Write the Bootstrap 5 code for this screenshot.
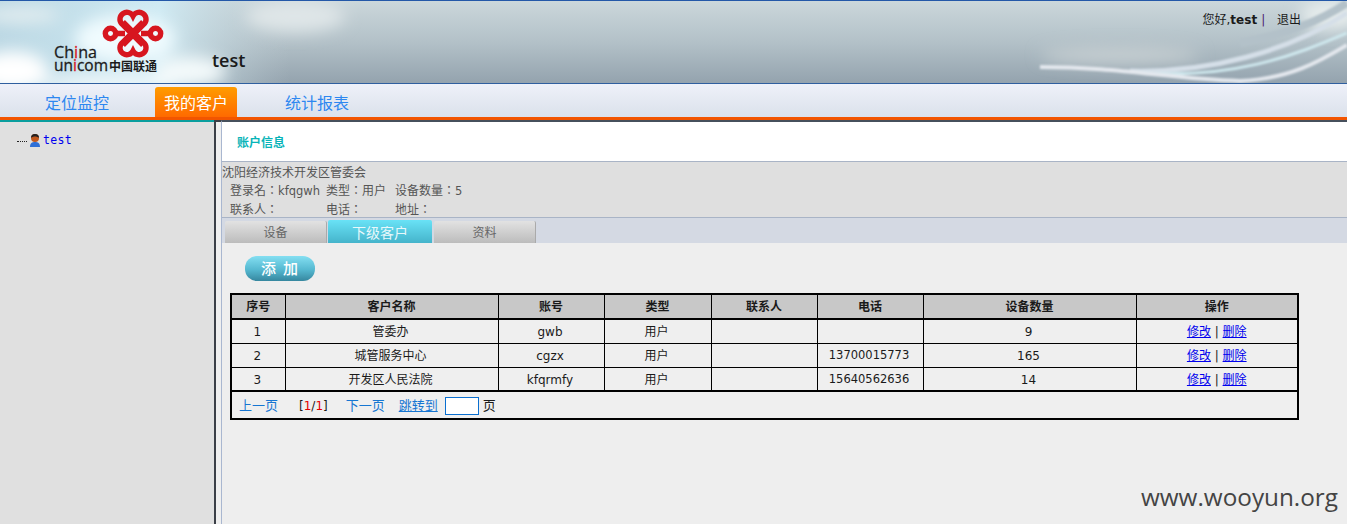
<!DOCTYPE html>
<html lang="zh-CN">
<head>
  <meta charset="UTF-8" />
  <meta name="viewport" content="width=device-width, initial-scale=1.0"/>
  <title>我的客户</title>
  <link href="https://cdn.jsdelivr.net/npm/bootstrap@5.3.3/dist/css/bootstrap.min.css" rel="stylesheet">
  <style>
    html, body { height: 100%; }
    body {
      margin: 0;
      overflow: hidden;
      background: #eee;
      color: #222;
      font-family: "DejaVu Sans", "Noto Sans CJK SC", sans-serif;
      font-size: 12px;
      line-height: 1.2;
    }

    /* top banner */
    .top-banner {
      position: relative;
      height: 84px;
      flex: none;
      border-top: 1px solid #2358a8;
      border-bottom: 1px solid #2f5f9f;
      background: linear-gradient(180deg, #cbd7db 0%, #b3c1c8 50%, #94a3ae 100%);
      overflow: hidden;
    }
    .banner-art { position: absolute; left: 0; top: 0; }
    .logo-art { position: relative; margin-left: 50px; flex: none; }
    .site-name { position: relative; margin: 49px 0 0 46px; font-family: "Open Sans", sans-serif; font-size: 18px; font-weight: 600; color: #1a1a1a; }
    .user-box { position: relative; margin: 12px 46px 0 auto; color: #1a1a1a; font-size: 12px; white-space: nowrap; }
    .user-box b { font-weight: 700; }
    .user-box i { font-style: normal; color: #4b1b6f; margin: 0 8px 0 4px; }

    /* main nav */
    .main-nav {
      height: 33px;
      flex: none;
      padding-left: 28px;
      background: linear-gradient(180deg, #eef1f9, #dbe1eb);
    }
    .main-nav a {
      display: block;
      width: 98px;
      text-align: center;
      text-decoration: none;
      font-size: 16px;
      line-height: 39px;
      color: #2d87f0;
    }
    .main-nav a.first { margin-right: 29px; }
    .main-nav a.on {
      width: 82px;
      margin: 3px 31px 0 0;
      line-height: 33px;
      color: #fff;
      border-radius: 3px 3px 0 0;
      background: linear-gradient(180deg, #ff9c00, #ff6a00);
    }
    .orange-rule { height: 3px; flex: none; background: #f25500; }

    /* body columns */
    .page-wrap { min-height: 0; flex: 1 1 auto; }
    .side-col {
      width: 214px;
      flex: none;
      border-top: 2px solid #0a9e9e;
      background: #e0e0e0;
      padding: 11px 0 0 17px;
    }
    .tree-dots { width: 10px; border-bottom: 1px dotted #222; margin: 8px 2px 0 0; height: 0; }
    .tree-label { font-family: "DejaVu Sans Mono", monospace; font-size: 11.5px; letter-spacing: .3px; color: #0000ee; margin-left: 2px; line-height: 14px; }
    .split-bar {
      width: 8px;
      flex: none;
      border-left: 2px solid #3b3f47;
      border-right: 1px solid #a9b7d0;
      border-top: 2px solid #3b3f47;
      background: #efefef;
    }
    .main-col { min-width: 0; flex: 1 1 auto; border-top: 2px solid #46505c; }

    .acct-title { height: 39px; padding: 14px 0 0 15px; background: #fff; font-weight: 700; color: #08b4b8; }
    .acct-info {
      height: 57px;
      border-top: 1px solid #a9b4c6;
      border-bottom: 1px solid #a9b4c6;
      background: #dfdfdf;
      color: #555;
      padding-top: 4px;
    }
    .acct-grid {
      display: grid;
      grid-template-columns: 96px 69px auto;
      justify-content: start;
      row-gap: 3px;
      margin: 3px 0 0 8px;
      font-family: "Noto Sans CJK TC", sans-serif;
    }
    .latin-txt { font-family: "DejaVu Sans", sans-serif; font-size: 11.5px; }

    .sub-tabs { height: 25px; padding: 3px 0 0 3px; background: #d4d9e3; gap: 1px; }
    .sub-tabs a {
      width: 102px;
      height: 22px;
      text-align: center;
      text-decoration: none;
      line-height: 25px;
      color: #666;
      border-radius: 2px 2px 0 0;
      border-right: 1px solid #aaa;
      background: linear-gradient(180deg, #e2e2e2, #bcbcbc);
    }
    .sub-tabs a.on {
      width: 104px;
      height: 23px;
      margin: -1px 1px 0 0;
      font-size: 14px;
      line-height: 27px;
      color: #e8f8fb;
      border-right: 0;
      background: linear-gradient(180deg, #69e2f6, #45b4cb);
    }

    .work-area { padding: 13px 0 0 8px; }
    .add-btn {
      display: block;
      width: 70px;
      height: 25px;
      margin-left: 15px;
      padding: 0;
      border: 0;
      border-radius: 12px;
      font-size: 15px;
      font-weight: 500;
      line-height: 24px;
      color: #fff;
      letter-spacing: 1px;
      background: linear-gradient(180deg, #84dff2 0%, #55b8d0 55%, #36879f 100%);
    }
    .cust-wrap { width: 1067px; margin-top: 12px; }
    .cust-table {
      --bs-table-bg: #efefef;
      --bs-table-color: #1a1a1a;
      --bs-table-border-color: #000;
      table-layout: fixed;
      width: 100%;
      margin: 0;
      border: 2px solid #000;
      border-collapse: collapse;
    }
    .cust-table th, .cust-table td {
      padding: 2px 0 0;
      height: 24px;
      text-align: center;
      vertical-align: middle;
      border: 1px solid #000;
      font-size: 12px;
    }
    .cust-table tbody td { padding-right: 2px; }
    .cust-table tbody td:last-child { padding-right: 0; }
    .cust-table thead th { height: 25px; background: #c8c8c8; --bs-table-bg: #c8c8c8; font-weight: 700; border-bottom: 2px solid #000; }
    .cust-table td > a { color: #0000ee; }
    .cust-table .latin-txt { font-size: 11.5px; }
    .cust-table tfoot td { height: 28px; border-top: 2px solid #000; text-align: left; padding: 2px 0 0 7px; font-size: 13px; }
    .pager a { color: #1676d2; text-decoration: none; }
    .pager a.jump { text-decoration: underline; margin-left: 14px; }
    .pager .cur { margin: 0 18px 0 21px; font-size: 12px; }
    .pager .cur em { font-style: normal; color: #e60000; }
    .page-input { width: 34px; height: 18px; margin: 0 4px 0 7px; border: 1px solid #0a6fd0; background: #fff; padding: 0; }

    .wm-mark {
      position: absolute;
      right: 9px;
      bottom: 13px;
      font-family: "Open Sans", sans-serif;
      font-size: 24.3px;
      line-height: 1.2;
      color: #444;
    }
  </style>
</head>
<body class="d-flex flex-column">

  <div class="top-banner d-flex align-items-start">
    <svg class="banner-art" width="1347" height="82" viewBox="0 0 1347 82">
      <defs>
        <filter id="soft"><feGaussianBlur stdDeviation="8"/></filter>
        <filter id="soft2"><feGaussianBlur stdDeviation="1.2"/></filter>
        <linearGradient id="fadeL" x1="0" x2="1" y1="0" y2="0">
          <stop offset="0" stop-color="#bcd8e4"/>
          <stop offset=".55" stop-color="#cfeaf3"/>
          <stop offset="1" stop-color="#bccbd2" stop-opacity="0"/>
        </linearGradient>
      </defs>
      <rect x="0" y="0" width="290" height="82" fill="url(#fadeL)"/>
      <g filter="url(#soft)">
        <ellipse cx="125" cy="38" rx="50" ry="24" fill="#f0fbfe"/>
        <ellipse cx="20" cy="14" rx="40" ry="7" fill="#e6eff1"/>
        <ellipse cx="12" cy="70" rx="36" ry="20" fill="#fff"/>
        <ellipse cx="190" cy="70" rx="36" ry="14" fill="#f4fafb"/>
        <ellipse cx="110" cy="82" rx="70" ry="7" fill="#f8fcfd"/>
        <ellipse cx="295" cy="15" rx="50" ry="16" fill="#dfe6e8"/>
        <ellipse cx="1120" cy="54" rx="80" ry="8" fill="#c8d0d3"/>
        <ellipse cx="1330" cy="14" rx="30" ry="14" fill="#e8eeee"/>
      </g>
      <g fill="none" filter="url(#soft2)">
        <path d="M1130 70C1210 72 1290 50 1347 12" stroke="#d5dfe8" stroke-width="5"/>
        <path d="M1125 70C1230 82 1300 52 1347 32" stroke="#cfe8ee" stroke-width="3"/>
        <path d="M1040 66C1120 66 1170 78 1240 80C1290 78 1320 60 1347 44" stroke="#e4e8ee" stroke-width="4"/>
        <path d="M1240 42C1290 32 1320 20 1347 2" stroke="#b3c1c9" stroke-width="8"/>
      </g>
    </svg>
    <svg class="logo-art" width="116" height="82" viewBox="50 0 116 82">
      <g fill="none" stroke="#d7161f" stroke-width="5.400">
        <path d="M143 44 121.500 22.500A6.900 6.900 0 1 1 133 15A6.900 6.900 0 1 1 144.500 22.500L123 44"/>
        <path d="M143 21 121.500 42.500A6.900 6.900 0 1 0 133 50A6.900 6.900 0 1 0 144.500 42.500L123 21"/>
        <circle cx="110.500" cy="32.500" r="5.200"/>
        <circle cx="155.500" cy="32.500" r="5.200"/>
        <path d="M115 32.500H125M141 32.500H151"/>
      </g>
      <g font-family="'Open Sans', sans-serif" font-size="15.500" fill="#1b1b1b" stroke="#1b1b1b" stroke-width=".3">
        <text x="54" y="57" textLength="43" lengthAdjust="spacingAndGlyphs">Ch<tspan fill="#d7161f" stroke="#d7161f">i</tspan>na</text>
        <text x="54" y="70" textLength="54" lengthAdjust="spacingAndGlyphs">un<tspan fill="#d7161f" stroke="#d7161f">i</tspan>com</text>
      </g>
      <text x="109" y="69.500" font-family="'Noto Sans CJK SC', sans-serif" font-size="12" font-weight="700" fill="#1b1b1b" textLength="48" lengthAdjust="spacingAndGlyphs">中国联通</text>
    </svg>
    <div class="site-name">test</div>
    <div class="user-box">您好,<b>test</b><i>|</i> 退出</div>
  </div>

  <div class="main-nav d-flex flex-row">
    <a href="#" class="first">定位监控</a>
    <a href="#" class="on">我的客户</a>
    <a href="#">统计报表</a>
  </div>
  <div class="orange-rule"></div>

  <div class="page-wrap d-flex">
    <div class="side-col d-flex align-items-start">
      <span class="tree-dots"></span>
      <svg width="12" height="14" viewBox="0 0 12 14">
        <path d="M1 14C1 10 3 9 6 9s5 1 5 5z" fill="#2f6fd6"/>
        <circle cx="6" cy="5" r="4" fill="#c2581c"/>
        <path d="M2 5a4 4 0 0 1 8 0C8 3 4 3 2 5z" fill="#222"/>
      </svg>
      <span class="tree-label">test</span>
    </div>
    <div class="split-bar"></div>
    <div class="main-col d-flex flex-column">
      <div class="acct-title">账户信息</div>
      <div class="acct-info">
        <div>沈阳经济技术开发区管委会</div>
        <div class="acct-grid" lang="zh-TW">
          <span>登录名：<span class="latin-txt">kfqgwh</span></span><span>类型：用户</span><span>设备数量：<span class="latin-txt">5</span></span>
          <span>联系人：</span><span>电话：</span><span>地址：</span>
        </div>
      </div>
      <div class="sub-tabs d-flex">
        <a href="#">设备</a>
        <a href="#" class="on">下级客户</a>
        <a href="#">资料</a>
      </div>
      <div class="work-area flex-grow-1">
        <button type="button" class="btn add-btn">添 加</button>
        <div class="cust-wrap">
          <table class="table cust-table">
            <colgroup>
              <col width="54"><col width="213"><col width="106"><col width="107"><col width="106"><col width="106"><col width="213"><col width="162">
            </colgroup>
            <thead>
              <tr><th>序号</th><th>客户名称</th><th>账号</th><th>类型</th><th>联系人</th><th>电话</th><th>设备数量</th><th>操作</th></tr>
            </thead>
            <tbody>
              <tr><td>1</td><td>管委办</td><td>gwb</td><td>用户</td><td></td><td></td><td>9</td><td><a href="#">修改</a> | <a href="#">删除</a></td></tr>
              <tr><td>2</td><td>城管服务中心</td><td>cgzx</td><td>用户</td><td></td><td class="latin-txt">13700015773</td><td>165</td><td><a href="#">修改</a> | <a href="#">删除</a></td></tr>
              <tr><td>3</td><td>开发区人民法院</td><td>kfqrmfy</td><td>用户</td><td></td><td class="latin-txt">15640562636</td><td>14</td><td><a href="#">修改</a> | <a href="#">删除</a></td></tr>
            </tbody>
            <tfoot>
              <tr><td colspan="8">
                <div class="pager d-flex align-items-center">
                  <a href="#">上一页</a>
                  <span class="cur">[<em>1</em>/<em>1</em>]</span>
                  <a href="#">下一页</a>
                  <a href="#" class="jump">跳转到</a>
                  <input type="text" class="page-input">
                  <span>页</span>
                </div>
              </td></tr>
            </tfoot>
          </table>
        </div>
      </div>
    </div>
  </div>

  <div class="wm-mark">www.wooyun.org</div>

  <script src="https://cdn.jsdelivr.net/npm/bootstrap@5.3.3/dist/js/bootstrap.bundle.min.js"></script>
</body>
</html>
